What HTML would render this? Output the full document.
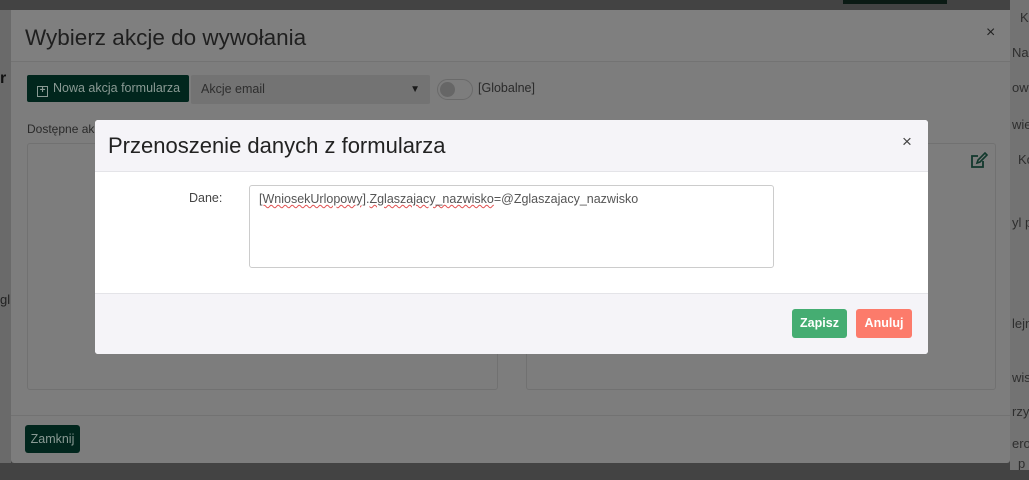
<!DOCTYPE html>
<html><head><meta charset="utf-8"><style>
*{box-sizing:border-box;margin:0;padding:0}
body{width:1029px;height:480px;overflow:hidden;background:#434343;font-family:"Liberation Sans",sans-serif;position:relative}
.a{position:absolute;white-space:nowrap}
.t{color:#2e2e2e;font-size:13px}
</style></head><body>
<div class="a" style="left:0;top:10px;width:11px;height:453px;background:#6a6a6a"></div>
<div class="a" style="left:1010px;top:0;width:19px;height:470px;background:#737373;overflow:hidden">
<div class="a t" style="left:10px;top:10px">K</div>
<div class="a t" style="left:2px;top:45px">Naz</div>
<div class="a t" style="left:2px;top:80px">owa</div>
<div class="a t" style="left:2px;top:117px">wie</div>
<div class="a t" style="left:8px;top:152px">Ko</div>
<div class="a t" style="left:2px;top:215px">yl p</div>
<div class="a t" style="left:2px;top:316px">lejn</div>
<div class="a t" style="left:2px;top:370px">wisz</div>
<div class="a t" style="left:2px;top:404px">rzy</div>
<div class="a t" style="left:2px;top:436px">ero</div>
<div class="a t" style="left:8px;top:456px">p</div>
</div>
<div class="a" style="left:843px;top:0;width:104px;height:4px;background:#0b1a14"></div>
<div class="a" style="left:0;top:70px;color:#111;font-size:16px;font-weight:bold">r</div>
<div class="a" style="left:0;top:292px;color:#222;font-size:13px">gl</div>
<div class="a" style="left:11px;top:10px;width:999px;height:453px;background:#7d7d7d;border-radius:3px">
  <div class="a" style="left:0;top:0;width:999px;height:52px;background:#7f7f7f;border-bottom:1px solid #737373"></div>
  <div class="a" style="left:14px;top:15px;font-size:22.5px;color:#1f1f1f">Wybierz akcje do wywołania</div>
  <div class="a" style="left:975px;top:14px;font-size:16px;color:#222">×</div>
  <div class="a" style="left:16px;top:65px;width:162px;height:27px;background:#01261d;border-radius:2px;color:#8a9a94;font-size:12.5px;line-height:27px;padding-left:10px">
    <span style="display:inline-block;width:11px;height:11px;border:1.5px solid #8a9a94;vertical-align:-1px;margin-right:5px;font-size:10px;line-height:8px;text-align:center;font-weight:bold">+</span>Nowa akcja formularza</div>
  <div class="a" style="left:180px;top:65px;width:239px;height:29px;background:#737373;border-radius:2px;color:#2e2e2e;font-size:12.5px;line-height:29px;padding-left:10px">Akcje email<span style="position:absolute;right:10px;font-size:10px;color:#1a1a1a">▼</span></div>
  <div class="a" style="left:426px;top:69px;width:36px;height:21px;border:1px solid #6a6a6a;border-radius:11px;background:#7d7d7d"><div style="position:absolute;left:2px;top:2px;width:15px;height:15px;border-radius:50%;background:#666"></div></div>
  <div class="a" style="left:467px;top:71px;font-size:12.5px;color:#2a2a2a">[Globalne]</div>
  <div class="a" style="left:16px;top:112px;font-size:12px;color:#2a2a2a">Dostępne ak</div>
  <div class="a" style="left:16px;top:133px;width:471px;height:247px;border:1px solid #717171;border-radius:3px"></div>
  <div class="a" style="left:515px;top:133px;width:470px;height:247px;border:1px solid #717171;border-radius:3px"></div>
  <svg class="a" style="left:959px;top:142px" width="18" height="17" viewBox="0 0 18 17"><path d="M13 9v6H2V4h6" fill="none" stroke="#11382c" stroke-width="1.8"/><path d="M7 11l1-3 7-7 2 2-7 7z" fill="none" stroke="#11382c" stroke-width="1.6"/></svg>
  <div class="a" style="left:0;top:405px;width:999px;height:1px;background:#727272"></div>
  <div class="a" style="left:14px;top:415px;width:55px;height:28px;background:#01261d;border-radius:3px;color:#8a9a94;font-size:12.5px;line-height:28px;text-align:center">Zamknij</div>
</div>
<div class="a" style="left:95px;top:120px;width:833px;height:234px;background:#fff;border-radius:3px;overflow:hidden">
  <div class="a" style="left:0;top:0;width:833px;height:52px;background:#f5f4f8;border-bottom:1px solid #e4e4e8"></div>
  <div class="a" style="left:13px;top:13px;font-size:22px;color:#222">Przenoszenie danych z formularza</div>
  <div class="a" style="left:807px;top:12px;font-size:17px;color:#444">×</div>
  <div class="a" style="left:94px;top:71px;font-size:12.5px;color:#444">Dane:</div>
  <div class="a" style="left:154px;top:65px;width:525px;height:83px;border:1px solid #ccc;border-radius:3px;padding:6px 9px;font-size:12.5px;color:#555"><span style="text-decoration:underline wavy #e05050;text-decoration-thickness:1px">[WniosekUrlopowy]</span>.<span style="text-decoration:underline wavy #e05050;text-decoration-thickness:1px">Zglaszajacy_nazwisko</span>=@Zglaszajacy_nazwisko</div>
  <div class="a" style="left:0;top:173px;width:833px;height:61px;background:#f5f4f8;border-top:1px solid #e4e4e8"></div>
  <div class="a" style="left:697px;top:189px;width:55px;height:29px;background:#45ad72;border-radius:3px;color:#fff;font-size:12.5px;font-weight:bold;line-height:29px;text-align:center">Zapisz</div>
  <div class="a" style="left:761px;top:189px;width:56px;height:29px;background:#fc7b6b;border-radius:3px;color:#fff;font-size:12.5px;font-weight:bold;line-height:29px;text-align:center">Anuluj</div>
</div>
</body></html>
